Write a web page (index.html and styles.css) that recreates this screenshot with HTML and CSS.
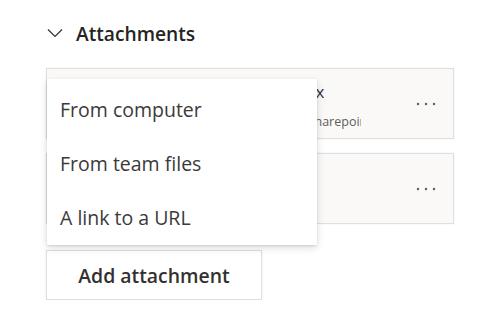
FILE: index.html
```html
<!DOCTYPE html>
<html>
<head>
<meta charset="utf-8">
<link rel="stylesheet" href="styles.css">
</head>
<body>
<div class="panel">
  <div class="header">
    <svg class="chevron" width="16" height="10" viewBox="0 0 16 10"><path d="M1 1.5 L8 8.5 L15 1.5" fill="none" stroke="#323130" stroke-width="1.2"/></svg>
    <span class="title">Attachments</span>
  </div>
  <div class="list">
    <div class="card">
      <div class="card-text">
        <div class="name">Roadmap.pptx</div>
        <div class="url">https://contoso.sharepoint.com/sites/team</div>
      </div>
      <button class="more" aria-label="More options">
        <svg width="20" height="4" viewBox="0 0 20 4"><circle cx="2" cy="2" r="1.2" fill="#605e5c"/><circle cx="10" cy="2" r="1.2" fill="#605e5c"/><circle cx="18" cy="2" r="1.2" fill="#605e5c"/></svg>
      </button>
    </div>
    <div class="card">
      <div class="card-text"></div>
      <button class="more" aria-label="More options">
        <svg width="20" height="4" viewBox="0 0 20 4"><circle cx="2" cy="2" r="1.2" fill="#605e5c"/><circle cx="10" cy="2" r="1.2" fill="#605e5c"/><circle cx="18" cy="2" r="1.2" fill="#605e5c"/></svg>
      </button>
    </div>
  </div>
  <button class="add-btn">Add attachment</button>
  <div class="menu">
    <div class="menu-item">From computer</div>
    <div class="menu-item">From team files</div>
    <div class="menu-item">A link to a URL</div>
  </div>
</div>
</body>
</html>
```
FILE: styles.css
```css
html, body {
  margin: 0;
  padding: 0;
  background: #ffffff;
}
body {
  font-family: "Open Sans", "Noto Sans", sans-serif;
  color: #323130;
}
.panel {
  position: relative;
  padding: 20px 0 0 46px;
  width: 408px;
}
.header {
  display: flex;
  align-items: center;
  height: 26px;
  margin-bottom: 22px;
}
.chevron {
  margin-left: 1px;
  margin-right: 13px;
}
.title {
  font-size: 19.2px;
  font-weight: 600;
  color: #252423;
}
.list {
  display: flex;
  flex-direction: column;
  gap: 14px;
}
.card {
  box-sizing: border-box;
  height: 71px;
  border: 1px solid #e1dfdd;
  background: #faf9f8;
  box-shadow: 0 0 1px rgba(0,0,0,0.12);
  display: flex;
  align-items: center;
}
.card-text {
  flex: 1;
  min-width: 0;
  overflow: hidden;
  padding-left: 161px;
  padding-top: 6px;
}
.name {
  font-size: 17px;
  white-space: nowrap;
  overflow: hidden;
  line-height: 30px;
}
.url {
  padding-left: 8px;
  font-size: 12.5px;
  color: #605e5c;
  white-space: nowrap;
  overflow: hidden;
  line-height: 30px;
}
.more {
  width: 40px;
  height: 32px;
  margin: 0 7px 0 45px;
  padding: 0;
  border: none;
  background: transparent;
  display: flex;
  align-items: center;
  justify-content: center;
}
.add-btn {
  display: block;
  box-sizing: border-box;
  margin-top: 26px;
  width: 216px;
  height: 50px;
  border: 1px solid #e1dfdd;
  background: #ffffff;
  box-shadow: 0 1px 3px rgba(0,0,0,0.08);
  font-family: inherit;
  font-size: 19.4px;
  font-weight: 600;
  color: #323130;
}
.menu {
  position: absolute;
  left: 47px;
  top: 79px;
  width: 270px;
  height: 166px;
  box-sizing: border-box;
  padding-top: 3px;
  background: #ffffff;
  box-shadow: 0 3px 8px rgba(0,0,0,0.13), 0 0.6px 2px rgba(0,0,0,0.11);
}
.menu-item {
  height: 54px;
  display: flex;
  align-items: center;
  padding-left: 13px;
  font-size: 19.5px;
  color: #3b3a39;
}
```
